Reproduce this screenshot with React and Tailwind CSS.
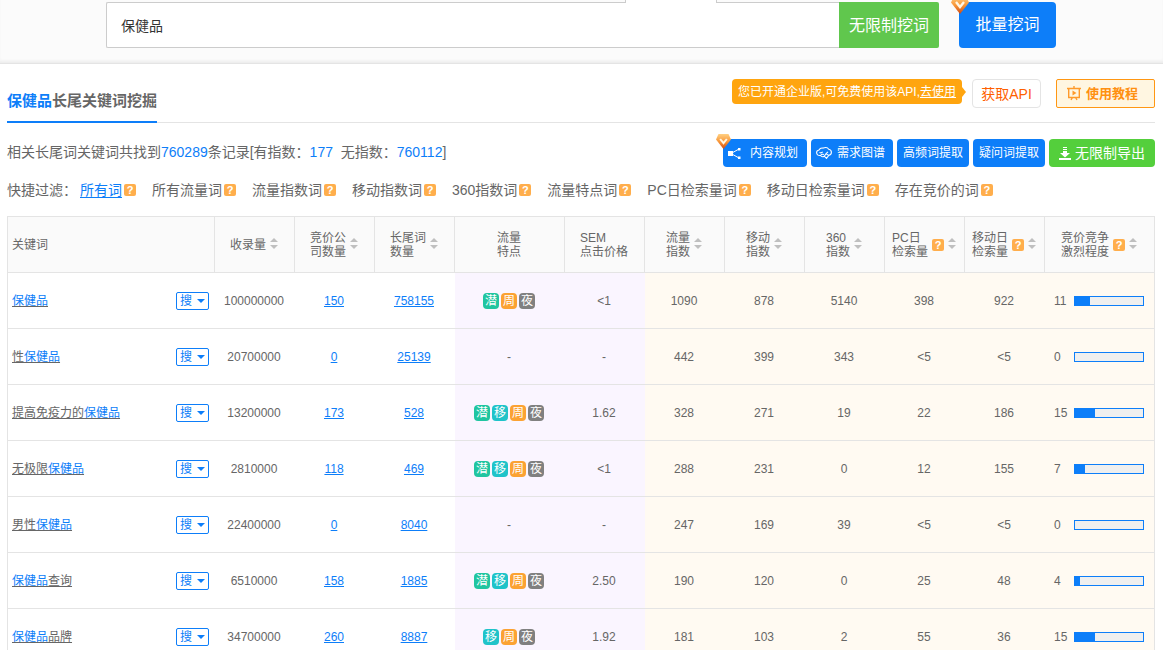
import React, { useState } from 'react';

const KEYWORD = '保健品';

const FILTERS = ['所有词', '所有流量词', '流量指数词', '移动指数词', '360指数词', '流量特点词', 'PC日检索量词', '移动日检索量词', '存在竞价的词'];

// lines: header text, one entry per line
const COLUMNS = [
    { key: 'word', lines: ['关键词'], width: '' },
    { key: 'records', lines: ['收录量'], width: 'w-20', sort: true },
    { key: 'bidders', lines: ['竞价公', '司数量'], width: 'w-20', sort: true },
    { key: 'longtail', lines: ['长尾词', '数量'], width: 'w-20', sort: true },
    { key: 'traits', lines: ['流量', '特点'], width: 'w-[110px]' },
    { key: 'sem', lines: ['SEM', '点击价格'], width: 'w-20' },
    { key: 'flow', lines: ['流量', '指数'], width: 'w-20', sort: true },
    { key: 'mobile', lines: ['移动', '指数'], width: 'w-20', sort: true },
    { key: 'so360', lines: ['360', '指数'], width: 'w-20', sort: true },
    { key: 'pcDaily', lines: ['PC日', '检索量'], width: 'w-20', sort: true, help: true },
    { key: 'mobileDaily', lines: ['移动日', '检索量'], width: 'w-20', sort: true, help: true },
    { key: 'level', lines: ['竞价竞争', '激烈程度'], width: 'w-[110px]', sort: true, help: true },
];

const ROWS = [
    { word: '保健品', records: '100000000', bidders: 150, longtail: 758155, traits: '潜周夜', sem: '<1', index: ['1090', '878', '5140', '398', '922'], level: 11 },
    { word: '性保健品', records: '20700000', bidders: 0, longtail: 25139, traits: '', sem: '-', index: ['442', '399', '343', '<5', '<5'], level: 0 },
    { word: '提高免疫力的保健品', records: '13200000', bidders: 173, longtail: 528, traits: '潜移周夜', sem: '1.62', index: ['328', '271', '19', '22', '186'], level: 15 },
    { word: '无极限保健品', records: '2810000', bidders: 118, longtail: 469, traits: '潜移周夜', sem: '<1', index: ['288', '231', '0', '12', '155'], level: 7 },
    { word: '男性保健品', records: '22400000', bidders: 0, longtail: 8040, traits: '', sem: '-', index: ['247', '169', '39', '<5', '<5'], level: 0 },
    { word: '保健品查询', records: '6510000', bidders: 158, longtail: 1885, traits: '潜移周夜', sem: '2.50', index: ['190', '120', '0', '25', '48'], level: 4 },
    { word: '保健品品牌', records: '34700000', bidders: 260, longtail: 8887, traits: '移周夜', sem: '1.92', index: ['181', '103', '2', '55', '36'], level: 15 },
];

const TRAIT_COLORS = {
    潜: 'bg-[#20c5a0]',
    移: 'bg-[#1fc3c9]',
    周: 'bg-[#fba233]',
    夜: 'bg-[#808080]',
};

export default function App() {
    const [query, setQuery] = useState(KEYWORD);
    const [filter, setFilter] = useState(FILTERS[0]);

    return (
        <div className="h-screen overflow-hidden bg-white font-['Liberation_Sans','Noto_Sans_CJK_SC',sans-serif] text-xs text-[#666]">

            {/* SEARCH BAR */}
            <header className="flex border-b border-[#e4e4e4] bg-[#fbfbfb] pt-0.5 pb-[15px] pl-[106px] pr-[107px] shadow-[inset_0_-3px_3px_-1px_#ececec]">
                <form className="relative flex flex-1" onSubmit={e => e.preventDefault()}>
                    <input
                        type="text"
                        aria-label="关键词"
                        value={query}
                        onChange={e => setQuery(e.target.value)}
                        className="h-[46px] min-w-0 flex-1 rounded-l-xs border border-r-0 border-[#ccc] bg-white px-3.5 text-sm text-[#333] outline-none"
                    />
                    {/* active tab joins the box */}
                    <span className="absolute -top-0.5 left-[519px] h-[3px] w-[92px] border-x border-[#ccc] bg-white" />
                    <button type="submit" className="w-[100px] rounded-r-xs bg-[#60c74d] pt-0.5 text-base text-white">无限制挖词</button>
                </form>
                <button type="button" className="relative ml-5 h-[46px] w-[97px] rounded bg-[#0d7ef9] text-base text-white">
                    <VipGem className="absolute -top-1.5 -left-2 h-[18px] w-[18px]" />
                    批量挖词
                </button>
            </header>

            <main className="pl-[7px] pr-2">

                {/* TITLE */}
                <div className="flex items-start justify-between border-b border-[#e4e4e4] pt-[15px]">
                    <h1 className="-mb-px border-b-2 border-[#0d7ef9] pt-2.5 pb-2 text-[15px] leading-6 font-bold">
                        <span className="text-[#0d7ef9]">{KEYWORD}</span>长尾关键词挖掘
                    </h1>
                    <div className="flex">
                        <div className="relative mr-2.5 h-[25px] rounded bg-[#ffa50f] px-1.5 leading-[26px] text-white">
                            您已开通企业版,可免费使用该API,<a href="#use" className="underline">去使用</a>
                            <svg className="absolute top-2 left-full h-2.5 w-1" viewBox="0 0 4 10"><path d="M0 0l4 5-4 5z" fill="#ffa50f" /></svg>
                        </div>
                        <button type="button" className="h-[29px] w-[69px] rounded-sm border border-[#e4e4e4] text-sm text-[#ff6000]">获取API</button>
                        <button type="button" className="ml-[15px] flex h-[29px] w-[99px] items-center gap-1 rounded-xs border border-[#ff9713] bg-[#fff6e1] pl-2.5 text-[13px] font-bold text-[#ff9010]">
                            <BoardIcon />
                            使用教程
                        </button>
                    </div>
                </div>

                {/* SUMMARY + ACTIONS */}
                <div className="flex items-start justify-between pt-4">
                    <p className="text-sm leading-[26px] whitespace-pre">
                        相关长尾词关键词共找到<Num>760289</Num>条记录[有指数：<Num>177</Num>{'  '}无指数：<Num>760112</Num>]
                    </p>
                    <div className="flex gap-1 text-white">
                        <button type="button" className="relative flex h-7 w-[84px] items-center gap-[9px] rounded-sm bg-[#0d7ef9] pl-[5px]">
                            <VipGem className="absolute -top-[5px] -left-[7px] h-[15px] w-[15px]" />
                            <ShareIcon />
                            内容规划
                        </button>
                        <button type="button" className="flex h-7 w-[82px] items-center gap-[5px] rounded-sm bg-[#0d7ef9] pl-[5px]">
                            <BrainIcon />
                            需求图谱
                        </button>
                        <button type="button" className="h-7 w-[72px] rounded-sm bg-[#0d7ef9]">高频词提取</button>
                        <button type="button" className="h-7 w-[72px] rounded-sm bg-[#0d7ef9]">疑问词提取</button>
                        <button type="button" className="flex h-7 w-[106px] items-center justify-center gap-1 rounded-sm bg-[#54cf3c] text-sm">
                            <DownloadIcon />
                            无限制导出
                        </button>
                    </div>
                </div>

                {/* QUICK FILTERS */}
                <nav className="flex gap-4 pt-[11px] text-sm leading-6">
                    <span className="-mr-[13px]">快捷过滤：</span>
                    {FILTERS.map(f => (
                        <div key={f} className="flex items-center gap-0.5 whitespace-nowrap">
                            <a
                                href="#filter"
                                onClick={() => setFilter(f)}
                                className={f === filter ? 'text-[#0d7ef9] underline underline-offset-2' : ''}
                            >
                                {f}
                            </a>
                            <Help />
                        </div>
                    ))}
                </nav>

                {/* RESULTS */}
                <table className="mt-3.5 w-full table-fixed border-separate border-spacing-0 border-t border-l border-[#e4e4e4]">
                    <thead>
                        <tr className="h-14 bg-[#fafafa]">
                            {COLUMNS.map(c => <HeadCell key={c.key} column={c} />)}
                        </tr>
                    </thead>
                    <tbody>
                        {ROWS.map(row => <Row key={row.word} row={row} />)}
                    </tbody>
                </table>
            </main>
        </div>
    );
}

function HeadCell({ column }) {
    const { key, lines, width, sort, help } = column;
    return (
        <th scope="col" className={`border-r border-b border-[#e4e4e4] p-0 font-normal ${width}`}>
            <div className={`flex items-center gap-1 ${key === 'word' ? 'pl-1' : 'justify-center pr-px'}`}>
                <span className="text-left leading-[14px] whitespace-nowrap">
                    {lines.map(l => <span key={l} className="block">{l}</span>)}
                </span>
                {help && <Help />}
                {sort && (
                    <button type="button" aria-label="排序" className="pb-0.5">
                        <svg className="h-[11px] w-2" viewBox="0 0 8 11" fill="#bfbfbf"><path d="M4 0l4 4H0zM4 11L0 7h8z" /></svg>
                    </button>
                )}
            </div>
        </th>
    );
}

function Row({ row }) {
    const cell = 'h-14 border-b border-[#e4e4e4] py-0 pl-0 text-center';
    const [before, after] = row.word.split(KEYWORD);

    return (
        <tr>
            <td className={`${cell} pr-0`}>
                <div className="flex items-center justify-between pr-1.5 pl-1">
                    <a href="#word" className="underline">{before}<span className="text-[#0d7ef9]">{KEYWORD}</span>{after}</a>
                    <button type="button" className="flex h-[18px] w-[33px] items-center justify-between rounded-xs border border-[#0d7ef9] bg-white px-[3px] text-[#0d7ef9]">
                        搜
                        <svg className="h-1 w-2" viewBox="0 0 8 4" fill="currentColor"><path d="M0 0h8L4 4z" /></svg>
                    </button>
                </div>
            </td>
            <td className={`${cell} pr-0.5`}>{row.records}</td>
            <td className={`${cell} pr-0.5`}><a href="#bidders" className="text-[#0d7ef9] underline">{row.bidders}</a></td>
            <td className={`${cell} pr-0.5`}><a href="#longtail" className="text-[#0d7ef9] underline">{row.longtail}</a></td>
            <td className={`${cell} bg-[#faf5ff] pr-0.5`}>
                {row.traits ? (
                    <div className="flex justify-center gap-0.5">
                        {[...row.traits].map(t => (
                            <span key={t} className={`h-4 w-4 rounded text-center leading-4 text-white ${TRAIT_COLORS[t]}`}>{t}</span>
                        ))}
                    </div>
                ) : '-'}
            </td>
            <td className={`${cell} bg-[#faf5ff] pr-0.5`}>{row.sem}</td>
            {row.index.map((v, i) => <td key={i} className={`${cell} bg-[#fffaf2] pr-0.5`}>{v}</td>)}
            <td className={`${cell} border-r bg-[#fffaf2] pr-0`}>
                <div className="flex items-center justify-between pr-2.5 pl-[9px]">
                    {row.level}
                    <span className="h-2.5 w-[70px] border border-[#0d7ef9] bg-[#efefef]">
                        <span className="block h-full bg-[#0d7ef9]" style={{ width: `${row.level * 2}%` }} />
                    </span>
                </div>
            </td>
        </tr>
    );
}

function Num({ children }) {
    return <span className="text-[#0d7ef9]">{children}</span>;
}

function Help() {
    return <span className="h-3 w-3 shrink-0 rounded-xs bg-[#ffae4c] text-center text-[11px] leading-3 font-bold text-white">?</span>;
}

// --- ICONS ---
function VipGem({ className }) {
    return (
        <svg className={className} viewBox="0 0 18 18">
            <defs>
                <linearGradient id="gem" x1="0" y1="0" x2="0" y2="1">
                    <stop offset="0" stopColor="#ffd083" />
                    <stop offset="0.5" stopColor="#f9983a" />
                    <stop offset="1" stopColor="#cf4a12" />
                </linearGradient>
            </defs>
            <path d="M3 0h12l3 6.500L9 18 0 6.500z" fill="url(#gem)" />
            <path d="M5 6l4 5 4-5" fill="none" stroke="#fff6e4" strokeWidth="2.400" />
        </svg>
    );
}

function ShareIcon() {
    return (
        <svg className="h-[13px] w-[13px]" viewBox="0 0 13 13">
            <path d="M3 6.500L11 2M3 6.500L11 11" stroke="#fff" />
            <path d="M0 4h5v5H0zM10 1h2.500v2.500H10zM10 9.500h2.500V12H10z" fill="#fff" />
        </svg>
    );
}

function BrainIcon() {
    return (
        <svg className="h-3 w-4" viewBox="0 0 16 12" fill="none" stroke="#fff" strokeWidth="1.100">
            <path d="M4.500 8.500C2 8.800.6 7.500.6 5.600.6 4 2 3.200 3 3c.8-1.600 2.600-2.300 4.200-1.900C9.500.2 11.800.8 12.700 2.300c1.700.3 2.700 1.500 2.700 3 0 1.800-1.200 2.900-2.700 3.100L10.500 11.400 8.300 9.200c-1.500.8-3 .5-3.800-.7z" />
            <path d="M3.500 5.500c1.200.6 2.400.3 3.200-.6M4.500 8.500c.8-1 2.200-1.400 3.500-1M8.300 9.200l1.700-2.500 2.700 1.700M10 6.700l2-1.900" />
        </svg>
    );
}

function DownloadIcon() {
    return (
        <svg className="h-[13px] w-3" viewBox="0 0 12 13" fill="#fff">
            <path d="M4 0h4v1H4zM4 2h4v1H4zM4 4h4v2h3l-5 4.500L1 6h3zM0 11h12v2H0z" />
        </svg>
    );
}

function BoardIcon() {
    return (
        <svg className="h-[15px] w-[15px]" viewBox="0 0 15 15" fill="none" stroke="#ff9a2a" strokeWidth="1.400">
            <path d="M0 2.500h14M1.700 2.500v9h10.600v-9M7 0v2.500M5.500 11.500L4 14M8.500 11.500L10 14" />
            <path d="M5.500 4.500L9.500 7l-4 2.500z" fill="#ff9a2a" stroke="none" />
        </svg>
    );
}
